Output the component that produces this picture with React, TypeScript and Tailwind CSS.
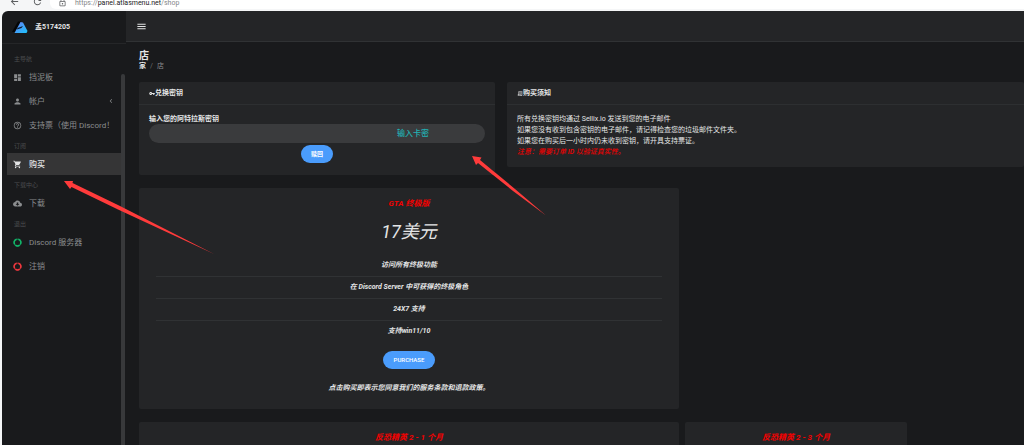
import type { ComponentType, ReactNode } from 'react';
import clsx from 'clsx';
import {
  MdArrowBack,
  MdChevronLeft,
  MdCloudDownload,
  MdDashboard,
  MdHelpOutline,
  MdLockOutline,
  MdMenu,
  MdOutlineReceiptLong,
  MdPerson,
  MdRefresh,
  MdShoppingCart,
  MdVpnKey,
} from 'react-icons/md';

type Icon = ComponentType<{ className?: string }>;

type NavItem = {
  text: string;
  icon: Icon;
  iconClass?: string;
  isActive?: boolean;
  hasChildren?: boolean;
};

const navSections: { title: string; items: NavItem[] }[] = [
  {
    title: '主导航',
    items: [
      { text: '挡泥板', icon: MdDashboard },
      { text: '帐户', icon: MdPerson, hasChildren: true },
      { text: '支持票（使用 Discord！', icon: MdHelpOutline },
    ],
  },
  { title: '订阅', items: [{ text: '购买', icon: MdShoppingCart, isActive: true }] },
  { title: '下载中心', items: [{ text: '下载', icon: MdCloudDownload }] },
  {
    title: '退出',
    items: [
      { text: 'Discord 服务器', icon: RingIcon, iconClass: 'text-[#12b76a]' },
      { text: '注销', icon: RingIcon, iconClass: 'text-[#f0383f]' },
    ],
  },
];

const features = [
  '访问所有终极功能',
  '在 Discord Server 中可获得的终极角色',
  '24X7 支持',
  '支持win11/10',
];

export default function App() {
  return (
    <div className="relative h-screen overflow-hidden bg-[#f5f6f7] font-[Roboto,'Noto_Sans_CJK_SC',sans-serif] text-[7px] leading-[10px] text-[#e4e5e6]">
      <BrowserBar />
      <div className="ml-0.5 flex h-full overflow-hidden rounded-tl-md bg-[#191a1c]">
        <Sidebar />
        <div className="min-w-0 flex-1">
          <header className="flex h-[31px] items-center border-b border-[#303234] bg-[#242527] px-2.5">
            <button aria-label="菜单" className="text-[11px]">
              <MdMenu />
            </button>
          </header>

          <main className="pl-[13px] pt-[9px]">
            <h1 className="text-[10px] font-bold leading-[10px]">店</h1>
            <nav className="flex gap-1 leading-[10px]">
              <a href="#home" className="font-bold">
                家
              </a>
              <span className="text-[#6d6f71]">/</span>
              <span className="text-[#8a8c8e]">店</span>
            </nav>

            <div className="mt-[11px] grid grid-cols-[356fr_517fr] items-start gap-3">
              <RedeemCard />
              <NoticeCard />
            </div>

            <div className="mt-[13px] grid grid-cols-[540fr_222fr_111fr] gap-x-1.5 gap-y-[13px]">
              <PlanCard />
              <div className="col-span-2" />
              <PlanTeaser title="反恐精英 2 - 1 个月" />
              <PlanTeaser title="反恐精英 2 - 3 个月" />
            </div>
          </main>
        </div>
      </div>
      <Arrows />
    </div>
  );
}

function BrowserBar() {
  return (
    <div className="flex h-[11px] items-start overflow-hidden text-[#5c5e60]">
      <div className="-mt-1 flex w-[50px] shrink-0 gap-3 pl-[9px] text-[11px]">
        <MdArrowBack />
        <MdRefresh />
      </div>
      <div className="flex h-[9px] flex-1 items-start gap-2 rounded-bl-md bg-white pl-2">
        <MdLockOutline className="-mt-0.5 text-[9px]" />
        <p className="leading-[7px] text-[#85878a]">
          https://<span className="text-[#222]">panel.atlasmenu.net</span>/shop
        </p>
      </div>
    </div>
  );
}

function Sidebar() {
  return (
    <aside className="flex w-[124px] shrink-0 flex-col">
      <div className="flex h-[33px] items-center gap-[7px] border-b border-[#252628] pl-2.5">
        <Logo />
        <span className="font-bold">孟5174205</span>
      </div>
      <div className="flex min-h-0 flex-1">
        <nav className="min-w-0 flex-1 pl-[5px] pt-[7px]">
          {navSections.map(section => (
            <div key={section.title}>
              <p className="h-[15px] pl-[7px] pt-[3px] text-[6px] leading-[9px] text-[#4b4d4f]">
                {section.title}
              </p>
              {section.items.map(item => (
                <SidebarLink key={item.text} item={item} />
              ))}
            </div>
          ))}
        </nav>
        <div className="mr-px mt-[30px] w-1 rounded-t-sm bg-[#38393b]" />
      </div>
    </aside>
  );
}

function SidebarLink({ item }: { item: NavItem }) {
  const ItemIcon = item.icon;

  return (
    <a
      href="#nav"
      className={clsx(
        'mb-0.5 flex h-[22px] items-center gap-[7px] overflow-hidden whitespace-nowrap px-1.5 text-[8px]',
        item.isActive ? 'bg-[#353536] font-medium text-[#e4e5e6]' : 'text-[#8b8d8f]'
      )}
    >
      <ItemIcon className={clsx('h-[9px] w-[9px] shrink-0', item.iconClass)} />
      <span className="flex-1 pt-px">{item.text}</span>
      {item.hasChildren && <MdChevronLeft className="text-[8px]" />}
    </a>
  );
}

function RingIcon({ className }: { className?: string }) {
  return (
    <svg viewBox="0 0 24 24" className={className} fill="none" stroke="currentColor">
      <circle cx="12" cy="12" r="9" strokeWidth="4" opacity="0.5" />
      <path d="M14.500 3.400a9 9 0 0 1 5 13.500M17.500 19.100a9 9 0 0 1-11 0M4.500 16.900a9 9 0 0 1 5-13.500" strokeWidth="4" />
    </svg>
  );
}

function Logo() {
  return (
    <svg viewBox="0 0 16 16" className="h-4 w-4">
      <defs>
        <linearGradient id="logo" x1="0" y1="0" x2="1" y2="1">
          <stop offset="0" stopColor="#6a7cf5" />
          <stop offset="1" stopColor="#1cc4fb" />
        </linearGradient>
      </defs>
      <path d="M6 2.500 9 2.500 3.500 13 0 13z" fill="#050607" />
      <path d="M8.500 3 11 3.500 15.500 12 14.500 14H2.500z" fill="url(#logo)" />
      <path d="M5.500 9 11 7 9.500 9 5 10.500z" fill="#101b2c" />
    </svg>
  );
}

function Card({ className, children }: { className?: string; children: ReactNode }) {
  return <section className={clsx('rounded-xs bg-[#242527]', className)}>{children}</section>;
}

function CardHeader({ icon: TitleIcon, title }: { icon: Icon; title: string }) {
  return (
    <h2 className="flex h-[23px] items-center border-b border-[#2d2f31] px-2.5 font-bold">
      <TitleIcon className="h-[7px] w-[6px]" />
      {title}
    </h2>
  );
}

function RedeemCard() {
  return (
    <Card>
      <CardHeader icon={MdVpnKey} title="兑换密钥" />
      <form className="flex flex-col px-2.5 pb-3 pt-[9px]">
        <label htmlFor="licenseKey" className="font-bold">
          输入您的阿特拉斯密钥
        </label>
        <input
          id="licenseKey"
          placeholder="输入卡密"
          className="h-[19px] w-full rounded-full bg-[#3a3b3d] pr-14 text-right text-[8px] font-medium placeholder:text-[#22b1b3]"
        />
        <button
          type="button"
          className="mt-0.5 h-[18px] self-center rounded-full bg-[#4a9cfc] px-2.5 text-[6px] font-bold text-white"
        >
          赎回
        </button>
      </form>
    </Card>
  );
}

function NoticeCard() {
  return (
    <Card className="min-w-0">
      <CardHeader icon={MdOutlineReceiptLong} title="购买须知" />
      <div className="whitespace-nowrap px-2.5 py-[9px] leading-[11px]">
        <p>所有兑换密钥均通过 Sellix.io 发送到您的电子邮件</p>
        <p>如果您没有收到包含密钥的电子邮件，请记得检查您的垃圾邮件文件夹。</p>
        <p>如果您在购买后一小时内仍未收到密钥，请开具支持票证。</p>
        <p className="font-medium italic text-[#f00000]">注意：需要订单 ID 以验证真实性。</p>
      </div>
    </Card>
  );
}

function PlanCard() {
  return (
    <Card className="px-[17px] pb-4 pt-[11px] text-center font-bold italic">
      <h2 className="text-[8px] text-[#f50000]">GTA 终极版</h2>
      <p className="mt-2 text-[18px] font-normal leading-[30px]">17美元</p>
      <ul className="mt-2 divide-y divide-[#303234] leading-[9px]">
        {features.map(feature => (
          <li key={feature} className="py-1.5">
            {feature}
          </li>
        ))}
      </ul>
      <button className="mt-[9px] h-[18px] rounded-full bg-[#4a9cfc] px-[11px] text-[6px] font-medium not-italic text-white">
        PURCHASE
      </button>
      <p className="mt-3.5">点击购买即表示您同意我们的服务条款和退款政策。</p>
    </Card>
  );
}

function PlanTeaser({ title }: { title: string }) {
  return (
    <Card className="px-[17px] pb-6 pt-[11px] text-center">
      <h2 className="text-[8px] font-bold italic text-[#f50000]">{title}</h2>
    </Card>
  );
}

// Pointer arrows drawn over the page
function Arrows() {
  return (
    <svg
      viewBox="0 0 1024 445"
      preserveAspectRatio="xMinYMin slice"
      className="pointer-events-none absolute inset-0 h-full w-full"
      fill="#ff3b3b"
    >
      <path d="M64 181 73 181 72.500 183 120 206 214 254 118 209.500 71.500 187 70 189z" />
      <path d="M472 156 481.500 157.500 480 160 515 189 546 215.500 513 191 478 163 476 165z" />
    </svg>
  );
}
